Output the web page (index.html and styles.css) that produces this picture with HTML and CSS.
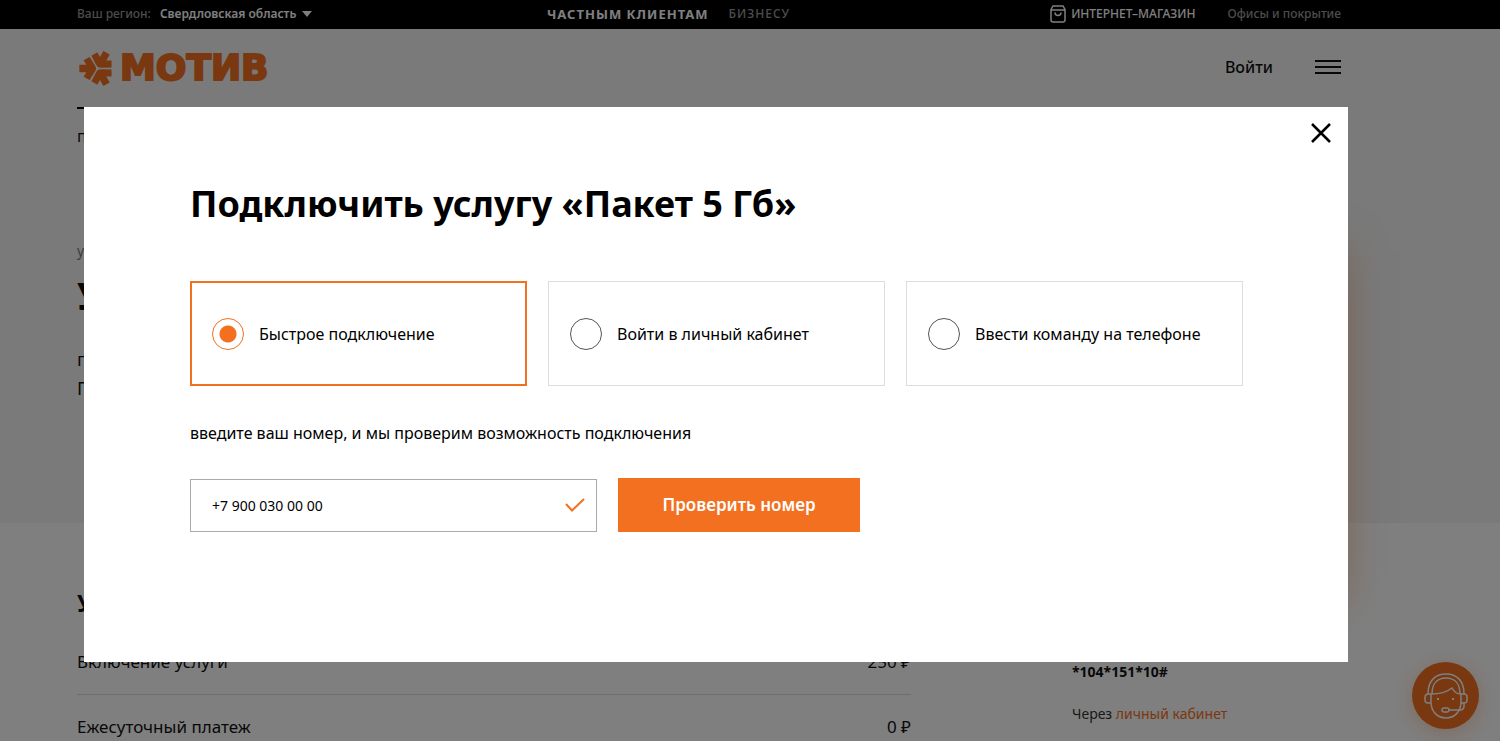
FILE: index.html
```html
<!DOCTYPE html>
<html lang="ru">
<head>
<meta charset="utf-8">
<title>Мотив</title>
<link rel="stylesheet" href="styles.css">
</head>
<body>
<div class="page">
  <div class="topbar">
    <div class="region">Ваш регион: <button class="region-btn" type="button">Свердловская область <svg width="10" height="6" viewBox="0 0 10 6"><path d="M0 0h10L5 6z" fill="currentColor"/></svg></button></div>
    <nav class="audience"><a class="active" href="#">ЧАСТНЫМ КЛИЕНТАМ</a><a href="#">БИЗНЕСУ</a></nav>
    <nav class="extra">
      <a class="shop" href="#"><svg width="16" height="18" viewBox="0 0 16 18" fill="none" stroke="currentColor" stroke-width="1.5"><path d="M1 4.5 3 1h10l2 3.5V15a2 2 0 0 1-2 2H3a2 2 0 0 1-2-2zM1 5h14M5 7.500c0 4 6 4 6 0"/></svg>ИНТЕРНЕТ–МАГАЗИН</a>
      <a href="#">Офисы и покрытие</a>
    </nav>
  </div>
  <div class="hero">
    <header class="header">
      <a class="logo" href="#">
        <svg width="37" height="37" viewBox="-56 -56 112 112" fill="currentColor">
          <path id="arm" d="M-42-25-24-35-8-10Q-4-3-4 0-4 3-8 10L-24 35-42 25-34 11H-55V-11H-34Z"/>
          <use href="#arm" transform="rotate(120)"/>
          <use href="#arm" transform="rotate(240)"/>
        </svg>
        <span class="wordmark">МОТИВ</span>
      </a>
      <div class="account">
        <a class="login" href="#">Войти</a>
        <button class="burger" type="button" aria-label="Меню"><svg width="26" height="16" viewBox="0 0 26 16"><path d="M0 2h26M0 8h26M0 14h26" stroke="currentColor" stroke-width="2"/></svg></button>
      </div>
    </header>
    <nav class="tabs"><a href="#">п</a></nav>
    <p class="crumb">у</p>
    <h1 class="hero-title">У</h1>
    <p class="lead">п<br>П</p>
    <div class="promo"></div>
  </div>
  <main class="details">
    <section class="prices">
      <h2 class="prices-title">У</h2>
      <dl class="price-list">
        <div class="price"><dt>Включение услуги</dt><dd>250 ₽</dd></div>
        <div class="price"><dt>Ежесуточный платеж</dt><dd>0 ₽</dd></div>
      </dl>
    </section>
    <aside class="connect">
      <p class="code">*104*151*10#</p>
      <p class="via">Через <a href="#">личный кабинет</a></p>
    </aside>
  </main>
  <button class="support" type="button" aria-label="Поддержка">
    <svg width="44" height="46" viewBox="0 0 44 46" fill="none" stroke="currentColor" stroke-width="1.500">
      <path d="M4 21C4 8 11 1 22 1s18 7 18 20M8 21C8 11 13 5 22 5s14 6 14 16"/>
      <path d="M7 21v8c0 9 6 16 15 16s15-7 15-16v-8"/>
      <path d="M7 21c9 0 16-2 21-6 2 4 4 6 9 6M7 21H4a3 3 0 0 0-3 3v3a3 3 0 0 0 3 3h3M37 21h3a3 3 0 0 1 3 3v3a3 3 0 0 1-3 3h-3M40 30v3q0 4-4 4H25"/>
      <rect x="18" y="35" width="7" height="4" rx="2"/>
      <path d="M13 26h2M28 26h2" stroke-width="2"/>
    </svg>
  </button>
</div>
<div class="overlay">
  <div class="modal" role="dialog" aria-modal="true" aria-labelledby="modal-title">
    <button class="close" type="button" aria-label="Закрыть"><svg width="20" height="20" viewBox="0 0 20 20"><path d="M1 1l18 18M19 1 1 19" stroke="currentColor" stroke-width="2.500"/></svg></button>
    <h2 class="modal-title" id="modal-title">Подключить услугу «Пакет 5 Гб»</h2>
    <form class="form">
      <div class="options">
        <label class="option"><input type="radio" name="method" checked>Быстрое подключение</label>
        <label class="option"><input type="radio" name="method">Войти в личный кабинет</label>
        <label class="option"><input type="radio" name="method">Ввести команду на телефоне</label>
      </div>
      <label class="hint" for="phone">введите ваш номер, и мы проверим возможность подключения</label>
      <div class="check-row">
        <div class="phone">
          <input id="phone" type="tel" value="+7 900 030 00 00">
          <svg width="20" height="14" viewBox="0 0 20 14" fill="none"><path d="M1 6l6 6.500L19 1" stroke="currentColor" stroke-width="2"/></svg>
        </div>
        <button class="submit" type="button">Проверить номер</button>
      </div>
    </form>
  </div>
</div>
</body>
</html>
```
FILE: styles.css
```css
* { box-sizing: border-box; }
:root { --orange: #f37021; --left: 77px; --right: 159px; }
body, h1, h2, p, dl, dd { margin: 0; }
body { font-family: "Noto Sans", "Open Sans", sans-serif; color: #111; background: #fff; }
a { color: inherit; text-decoration: none; }
button, input { font: inherit; color: inherit; }
button { border: 0; padding: 0; background: none; cursor: pointer; }
svg { display: block; flex: none; }

.page { position: relative; height: 100vh; overflow: hidden; }

.topbar {
  display: grid;
  grid-template-columns: 470px 1fr auto;
  align-items: center;
  height: 29px;
  padding: 0 var(--right) 2px var(--left);
  background: #000;
  color: #999;
  font-size: 12px;
  font-weight: 500;
}
.region { display: flex; align-items: center; gap: 9px; }
.region-btn { display: flex; align-items: center; gap: 6px; color: #fff; font-weight: 600; }
.audience { display: flex; align-items: center; gap: 20px; letter-spacing: 1px; }
.audience .active { color: #fff; font-size: 13px; font-weight: 700; }
.extra { display: flex; align-items: center; gap: 32px; }
.shop { display: flex; align-items: center; gap: 5px; color: #fff; }

.hero { position: relative; height: 494px; padding: 0 var(--right) 0 var(--left); background: #f4f4f4; }
.header { display: flex; align-items: center; justify-content: space-between; height: 78px; padding-bottom: 2px; }
.logo { display: flex; align-items: center; gap: 4px; padding: 2px 0 0 2px; color: var(--orange); }
.wordmark { font: 700 36px/40px "DejaVu Sans", sans-serif; -webkit-text-stroke: 2px var(--orange); }
.account { display: flex; align-items: center; gap: 42px; }
.login { font-size: 16px; font-weight: 500; }
.tabs { display: flex; font-size: 16px; }
.tabs a { padding-top: 16px; border-top: 2px solid #000; line-height: 22px; }
.crumb { margin-top: 94px; font-size: 14px; line-height: 20px; color: #777; }
.hero-title { margin-top: 4px; font-size: 38px; line-height: 60px; }
.lead { margin-top: 20px; font-size: 18px; line-height: 29px; }
.promo {
  position: absolute;
  top: 221px;
  right: var(--right);
  width: 270px;
  height: 350px;
  background: #fff;
  box-shadow: 0 0 40px rgba(243, 112, 33, .5);
}

.details {
  display: grid;
  grid-template-columns: 834px 1fr;
  gap: 161px;
  padding: 62px var(--right) 0 var(--left);
}
.prices-title { font-size: 24px; line-height: 36px; }
.price-list { margin-top: 9px; }
.price { display: flex; justify-content: space-between; align-items: center; height: 65px; padding-bottom: 2px; border-bottom: 1px solid #ddd; font-size: 17px; }
.connect { padding-top: 76px; font-size: 14px; line-height: 22px; }
.code { font-weight: 700; }
.via { margin-top: 20px; color: #333; }
.via a { color: var(--orange); }

.support {
  position: absolute;
  right: 21px;
  bottom: 12px;
  display: grid;
  place-items: center;
  width: 67px;
  height: 67px;
  border-radius: 50%;
  background: var(--orange);
  color: #fff;
  box-shadow: 0 4px 20px rgba(243, 112, 33, .3);
}

.overlay { position: fixed; inset: 0; padding: 107px 152px 0 84px; background: rgba(0, 0, 0, .5); }
.modal { position: relative; padding: 69px 105px 130px 106px; background: #fff; color: #000; }
.close { position: absolute; top: 16px; right: 17px; }
.modal-title { font-size: 36px; line-height: 56px; }
.form { margin-top: 49px; }
.options { display: grid; grid-template-columns: repeat(3, 1fr); gap: 21px; }
.option {
  display: flex;
  align-items: center;
  gap: 15px;
  height: 105px;
  padding: 0 21px;
  border: 1px solid #ddd;
  font-size: 16px;
}
.option:has(:checked) { border: 2px solid var(--orange); padding: 0 20px; }
.option input {
  appearance: none;
  flex: none;
  width: 32px;
  height: 32px;
  margin: 0;
  border: 1px solid #555;
  border-radius: 50%;
}
.option input:checked {
  border-color: var(--orange);
  background: radial-gradient(circle, var(--orange) 8px, transparent 9px);
}
.hint { display: block; margin-top: 34px; font-size: 16px; line-height: 26px; }
.check-row { display: flex; align-items: flex-end; gap: 21px; margin-top: 32px; }
.phone { position: relative; width: 407px; color: var(--orange); }
.phone input { display: block; width: 100%; height: 53px; padding: 0 48px 0 21px; border: 1px solid #aaa; background: #fff; color: #000; font-size: 14px; }
.phone svg { position: absolute; top: 19px; right: 12px; }
.submit { width: 242px; height: 54px; padding-bottom: 2px; background: var(--orange); color: #fff; font-size: 17px; font-weight: 600; }
```
